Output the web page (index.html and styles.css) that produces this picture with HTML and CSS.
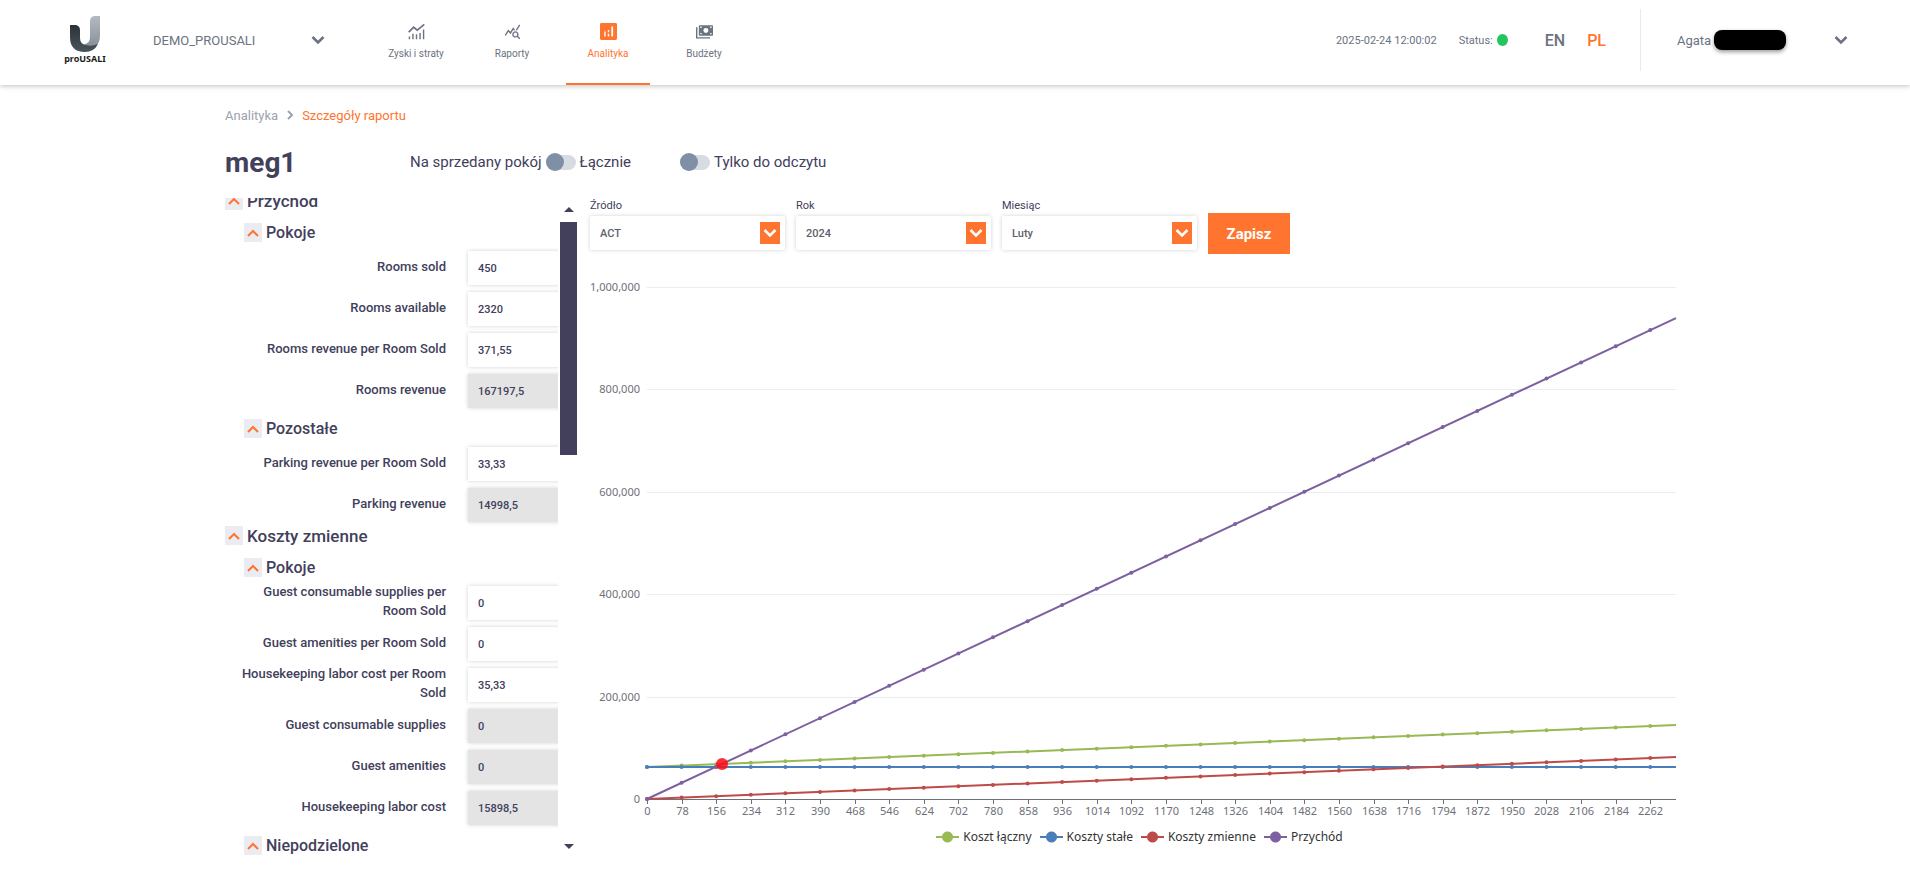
FILE: index.html
```
<!DOCTYPE html>
<html lang="pl">
<head>
<meta charset="utf-8">
<title>proUSALI – Szczegóły raportu</title>
<link rel="stylesheet" href="styles.css">
</head>
<body>
<svg class="defs" aria-hidden="true">
  <symbol id="chev-down" viewBox="0 0 14 10"><path d="M1.500 2L7 7.500 12.500 2" fill="none" stroke="currentColor" stroke-width="2.600"/></symbol>
  <symbol id="chev-up" viewBox="0 0 12 8"><path d="M1 7l5-5 5 5" fill="none" stroke="currentColor" stroke-width="2"/></symbol>
</svg>
<header class="topbar">
  <a class="logo" href="#" aria-label="proUSALI">
    <svg class="logo-mark" viewBox="0 0 30 36">
      <defs>
        <linearGradient id="lg1" x1="0" y1="0" x2="0" y2="1"><stop offset="0" stop-color="#2c3338"/><stop offset="1" stop-color="#4a545c"/></linearGradient>
        <linearGradient id="lg2" x1="0" y1="0" x2="0" y2="1"><stop offset="0" stop-color="#b4babf"/><stop offset="1" stop-color="#87919a"/></linearGradient>
      </defs>
      <path d="M30 0h-6q-4 1-4 5v16q0 7-6 7 4 4 12 2 4-4 4-10z" fill="url(#lg2)"/>
      <path d="M0 9h6q4 1 4 5v8q0 6 6 7 5 2 12-1-4 8-13 8Q0 36 0 21z" fill="url(#lg1)"/>
    </svg>
    <span class="logo-text">proUSALI</span>
  </a>
  <button class="picker property" type="button"><span>DEMO_PROUSALI</span><svg class="chev"><use href="#chev-down"/></svg></button>
  <nav class="nav">
    <a class="nav-item" href="#">
      <svg viewBox="0 0 24 24"><path d="M1 12L8 5l5 4 10-8" transform="translate(0 1)" fill="none" stroke="currentColor" stroke-width="2.400"/><path d="M1 19h2v4H1zM6 15h2v8H6zM11 16h2v7h-2zM16 14h2v9h-2zM21 9h2v14h-2z" fill="currentColor"/></svg>
      <span>Zyski i straty</span>
    </a>
    <a class="nav-item" href="#">
      <svg viewBox="0 0 24 24"><path fill="currentColor" d="M19.880 18.470c.44-.7.7-1.510.7-2.390 0-2.490-2.010-4.500-4.500-4.500s-4.500 2.010-4.500 4.500 2.010 4.500 4.490 4.500c.88 0 1.700-.26 2.390-.7L21.580 23 23 21.580l-3.120-3.110zm-3.800.11c-1.380 0-2.500-1.120-2.500-2.500s1.120-2.500 2.500-2.500 2.500 1.120 2.500 2.500-1.120 2.500-2.500 2.500zm-.36-8.500c-.74.02-1.450.18-2.100.45l-.55-.83-3.800 6.180-3.010-3.520-3.630 5.810L1 17l5-8 3 3.500L13 6l2.720 4.080zm2.590.5c-.64-.28-1.330-.45-2.050-.49L21.380 2 23 3.180l-4.690 7.400z"/></svg>
      <span>Raporty</span>
    </a>
    <a class="nav-item active" href="#">
      <svg viewBox="0 0 24 24"><path fill="currentColor" fill-rule="evenodd" d="M2 0h20a2 2 0 0 1 2 2v20a2 2 0 0 1-2 2H2a2 2 0 0 1-2-2V2a2 2 0 0 1 2-2zM6 12v7h2v-7zM11 10v3h2v-3zM11 15v4h2v-4zM16 5v14h2.500V5z"/></svg>
      <span>Analityka</span>
    </a>
    <a class="nav-item" href="#">
      <svg viewBox="0 0 24 24"><path d="M1 6v15h19" fill="none" stroke="currentColor" stroke-width="2"/><rect x="4" y="3" width="20" height="15" rx="1" fill="currentColor"/><circle cx="14" cy="10.500" r="3.500" fill="#fff"/><path d="M6 5h2v2H6zM20 5h2v2h-2zM6 14h2v2H6zM20 14h2v2h-2z" fill="#fff"/></svg>
      <span>Budżety</span>
    </a>
  </nav>
  <div class="status">
    <time>2025-02-24 12:00:02</time>
    <span class="state">Status: <i class="dot"></i></span>
  </div>
  <div class="langs"><button type="button">EN</button><button class="active" type="button">PL</button></div>
  <button class="picker user" type="button"><span class="who">Agata <i class="pill"></i></span><svg class="chev"><use href="#chev-down"/></svg></button>
</header>

<main class="page">
  <nav class="crumbs" aria-label="Breadcrumb">
    <a href="#">Analityka</a>
    <svg viewBox="0 0 8 10"><path d="M2 1l4 4-4 4" fill="none" stroke="currentColor" stroke-width="2"/></svg>
    <a class="current" href="#">Szczegóły raportu</a>
  </nav>
  <div class="title-row">
    <h1>meg1</h1>
    <label class="switch"><span>Na sprzedany pokój</span><input type="checkbox"><span>Łącznie</span></label>
    <label class="switch"><input type="checkbox"><span>Tylko do odczytu</span></label>
  </div>
  <div class="report">
    <aside class="panel">
      <div class="fields">
        <section class="group">
          <h2><button class="fold" type="button" aria-label="Zwiń Przychód"><svg><use href="#chev-up"/></svg></button>Przychód</h2>
          <div class="sub">
            <h3><button class="fold" type="button" aria-label="Zwiń Pokoje"><svg><use href="#chev-up"/></svg></button>Pokoje</h3>
            <div class="rows">
              <div class="row"><label for="f1">Rooms sold</label><input id="f1" value="450"></div>
              <div class="row"><label for="f2">Rooms available</label><input id="f2" value="2320"></div>
              <div class="row"><label for="f3">Rooms revenue per Room Sold</label><input id="f3" value="371,55"></div>
              <div class="row"><label for="f4">Rooms revenue</label><input id="f4" value="167197,5" readonly></div>
            </div>
          </div>
          <div class="sub">
            <h3><button class="fold" type="button" aria-label="Zwiń Pozostałe"><svg><use href="#chev-up"/></svg></button>Pozostałe</h3>
            <div class="rows">
              <div class="row"><label for="f5">Parking revenue per Room Sold</label><input id="f5" value="33,33"></div>
              <div class="row"><label for="f6">Parking revenue</label><input id="f6" value="14998,5" readonly></div>
            </div>
          </div>
        </section>
        <section class="group">
          <h2><button class="fold" type="button" aria-label="Zwiń Koszty zmienne"><svg><use href="#chev-up"/></svg></button>Koszty zmienne</h2>
          <div class="sub">
            <h3><button class="fold" type="button" aria-label="Zwiń Pokoje"><svg><use href="#chev-up"/></svg></button>Pokoje</h3>
            <div class="rows">
              <div class="row"><label for="f7">Guest consumable supplies per Room Sold</label><input id="f7" value="0"></div>
              <div class="row"><label for="f8">Guest amenities per Room Sold</label><input id="f8" value="0"></div>
              <div class="row"><label for="f9">Housekeeping labor cost per Room Sold</label><input id="f9" value="35,33"></div>
              <div class="row"><label for="f10">Guest consumable supplies</label><input id="f10" value="0" readonly></div>
              <div class="row"><label for="f11">Guest amenities</label><input id="f11" value="0" readonly></div>
              <div class="row"><label for="f12">Housekeeping labor cost</label><input id="f12" value="15898,5" readonly></div>
            </div>
          </div>
          <div class="sub">
            <h3><button class="fold" type="button" aria-label="Zwiń Niepodzielone"><svg><use href="#chev-up"/></svg></button>Niepodzielone</h3>
          </div>
        </section>
      </div>
      <div class="scrollbar" aria-hidden="true">
        <i class="arrow up"></i>
        <div class="track"><div class="thumb"></div></div>
        <i class="arrow down"></i>
      </div>
    </aside>
    <section class="content">
      <form class="filters">
        <div class="field"><label for="src">Źródło</label><div class="select"><select id="src"><option>ACT</option></select><span class="caret"><svg><use href="#chev-down"/></svg></span></div></div>
        <div class="field"><label for="year">Rok</label><div class="select"><select id="year"><option>2024</option></select><span class="caret"><svg><use href="#chev-down"/></svg></span></div></div>
        <div class="field"><label for="month">Miesiąc</label><div class="select"><select id="month"><option>Luty</option></select><span class="caret"><svg><use href="#chev-down"/></svg></span></div></div>
        <button class="save" type="button">Zapisz</button>
      </form>
      <svg class="chart" id="chart" viewBox="0 0 1095 555" role="img" aria-label="Próg rentowności"></svg>
      <ul class="legend">
        <li class="total">Koszt łączny</li>
        <li class="fixed">Koszty stałe</li>
        <li class="variable">Koszty zmienne</li>
        <li class="revenue">Przychód</li>
      </ul>
    </section>
  </div>
</main>
<script src="chart.js"></script>
</body>
</html>
```
FILE: styles.css
```
* { box-sizing: border-box; }
body { margin: 0; background: #fff; color: #42405b; font-family: Roboto, "Liberation Sans", sans-serif; font-size: 13px; }
a { color: inherit; text-decoration: none; }
button { border: 0; padding: 0; background: none; color: inherit; font: inherit; cursor: pointer; }
h1, h2, h3, ul { margin: 0; padding: 0; }
.defs { display: none; }

.topbar { display: flex; height: 85px; padding: 0 62px; color: #6b7280; background: #fff; box-shadow: 0 1px 5px rgba(0, 0, 0, .25); }
.logo { display: flex; flex-direction: column; align-items: center; width: 46px; padding-top: 16px; }
.logo-mark { width: 30px; height: 36px; }
.logo-text { margin-top: 1px; font: 700 9px/12px "Noto Sans", sans-serif; color: #1c1c1c; }
.picker { display: flex; align-items: center; justify-content: space-between; height: 80px; }
.property { width: 172px; margin-left: 45px; }
.chev { width: 14px; height: 10px; }
.nav { display: flex; gap: 12px; margin-left: 49px; }
.nav-item { display: flex; flex-direction: column; align-items: center; gap: 8px; width: 84px; padding-top: 23px; font-size: 10px; line-height: 12px; border-bottom: 2px solid transparent; }
.nav-item svg { width: 17px; height: 17px; }
.nav-item.active { color: #ff742e; border-color: #ff742e; }
.status { display: flex; align-items: center; gap: 22px; height: 80px; margin-left: auto; font-size: 11px; }
.state { display: flex; align-items: center; gap: 4px; }
.dot { width: 11px; height: 12px; border-radius: 50%; background: #22c55e; }
.langs { display: flex; gap: 22px; height: 62px; margin: 9px 0 0 37px; padding-right: 34px; font-size: 16px; font-weight: 500; border-right: 1px solid #e9eaec; }
.langs .active { color: #ff742e; }
.user { width: 171px; margin-left: 36px; }
.who { display: flex; align-items: center; gap: 3px; }
.pill { width: 72px; height: 20px; border-radius: 8px; background: #000; box-shadow: 0 2px 4px rgba(0, 0, 0, .4); }

.page { max-width: 1508px; margin: 0 auto; padding: 22px 24px 0; }
.crumbs { display: flex; align-items: center; gap: 8px; height: 16px; color: #9ca3af; }
.crumbs svg { width: 8px; height: 10px; }
.crumbs .current { color: #ff742e; }
.title-row { display: flex; align-items: center; height: 34px; margin-top: 22px; font-size: 15px; }
h1 { width: 185px; font-size: 28px; font-weight: 700; }
.switch { display: flex; align-items: center; gap: 4px; margin-right: 49px; }
.switch input { appearance: none; position: relative; width: 30px; height: 15px; margin: 0; border-radius: 8px; background: #d7dce3; }
.switch input::before { content: ""; position: absolute; left: 0; top: -2px; width: 18px; height: 18px; border-radius: 50%; background: #7f8fa6; }

.report { display: flex; gap: 13px; margin-top: 19px; }
.panel { display: flex; flex: 0 0 352px; height: 662px; overflow: hidden; }
.fields { width: 333px; margin-top: -7px; overflow: hidden; }
.group + .group { margin-top: 4px; }
h2, h3 { display: flex; align-items: center; gap: 4px; height: 19px; font-weight: 500; white-space: nowrap; }
h2 { font-size: 17px; }
h3 { font-size: 16px; }
h2 + .sub { margin-top: 13px; }
.sub + .sub { margin-top: 11px; }
h3 { margin-left: 19px; }
.fold { display: flex; align-items: center; justify-content: center; width: 18px; height: 19px; background: #ebecf2; color: #ff742e; }
.fold svg { width: 12px; height: 8px; }
.rows { display: flex; flex-direction: column; gap: 7px; margin-top: 9px; }
.row { display: flex; align-items: center; gap: 22px; height: 34px; }
.row label { flex: 0 0 221px; padding: 0 0 4px 12px; line-height: 19px; font-weight: 500; text-align: right; }
.row input { flex: 0 0 120px; height: 34px; padding: 0 10px; border: 0; background: #fff; color: #42405b; font: 500 11px Roboto, sans-serif; box-shadow: 0 0 4px rgba(0, 0, 0, .18); }
.row input:read-only { background: #e4e4e4; }
.scrollbar { display: flex; flex-direction: column; align-items: center; width: 17px; margin-left: 2px; padding: 9px 0 11px; }
.arrow { border: 5px solid transparent; }
.up { border-top: 0; border-bottom-color: #42405b; }
.down { border-bottom: 0; border-top-color: #42405b; }
.track { flex: 1; width: 100%; padding: 10px 0; }
.thumb { height: 38%; background: #42405b; }

.content { flex: 1; min-width: 0; }
.filters { display: flex; align-items: flex-end; gap: 11px; height: 56px; }
.field { width: 195px; padding-bottom: 4px; font-size: 11px; line-height: 14px; }
.select { position: relative; margin-top: 3px; }
.select select { display: block; appearance: none; width: 100%; height: 34px; padding: 0 10px; border: 0; border-radius: 2px; background: #fff; color: #5f5f6b; font: 500 11px Roboto, sans-serif; box-shadow: 0 0 4px rgba(0, 0, 0, .18); }
.caret { position: absolute; top: 6px; right: 5px; display: flex; align-items: center; justify-content: center; width: 20px; height: 22px; background: #ff742e; color: #fff; pointer-events: none; }
.caret svg { width: 14px; height: 10px; }
.save { width: 82px; height: 41px; background: #ff742e; color: #fff; font-size: 15px; font-weight: 700; }

.chart { display: block; width: 100%; margin-top: 20px; overflow: visible; font: 11px "Noto Sans", sans-serif; }
.chart text { fill: #6e7079; }
.grid { stroke: #e9ebf5; }
.axis { stroke: #6e7079; }
.series { fill: none; stroke-width: 2; }
.breakeven { fill: #ff0a12; fill-opacity: .85; }
.legend { display: flex; justify-content: center; gap: 8px; padding-left: 4px; list-style: none; font: 12px/16px "Noto Sans", sans-serif; color: #333; }
.legend li { display: flex; align-items: center; gap: 4px; }
.legend li::before { content: ""; width: 23px; height: 12px; background: radial-gradient(circle at center, currentColor 5px, transparent 6px), linear-gradient(currentColor, currentColor) center / 100% 2px no-repeat; }
.legend .total::before { color: #98b954; }
.legend .fixed::before { color: #4a7ebb; }
.legend .variable::before { color: #be4b48; }
.legend .revenue::before { color: #7d60a0; }
```
FILE: chart.js
```
const svg = document.getElementById('chart');
const NS = 'http://www.w3.org/2000/svg';
const rooms = 2320, step = 78, fixedCost = 62500;
const left = 57, right = 1086, top0 = 13, bottom = 525, maxValue = 1000000;
const x = v => left + v / rooms * (right - left);
const y = v => bottom - v / maxValue * (bottom - top0);

function add(name, attrs, text) {
  const el = document.createElementNS(NS, name);
  for (const key in attrs) el.setAttribute(key, attrs[key]);
  if (text) el.textContent = text;
  svg.appendChild(el);
}

for (let v = 0; v <= maxValue; v += 200000) {
  const py = Math.round(y(v)) + 0.5;
  if (v) add('line', { class: 'grid', x1: left, x2: right, y1: py, y2: py });
  add('text', { x: left - 7, y: py + 3, 'text-anchor': 'end' }, v.toLocaleString('en-US'));
}
add('line', { class: 'axis', x1: left, x2: right, y1: bottom + 0.5, y2: bottom + 0.5 });
for (let v = 0; v < rooms; v += step) {
  const px = Math.round(x(v)) + 0.5;
  add('line', { class: 'axis', x1: px, x2: px, y1: bottom, y2: bottom + 5 });
  add('text', { x: px, y: bottom + 16, 'text-anchor': 'middle' }, String(v));
}

const series = [
  ['#98b954', n => fixedCost + 35.33 * n],
  ['#4a7ebb', () => fixedCost],
  ['#be4b48', n => 35.33 * n],
  ['#7d60a0', n => (371.55 + 33.33) * n]
];
for (const [color, f] of series) {
  add('line', { class: 'series', stroke: color, x1: x(0), y1: y(f(0)), x2: x(rooms), y2: y(f(rooms)) });
  for (let v = 0; v < rooms; v += step) add('circle', { cx: x(v), cy: y(f(v)), r: 2, fill: color });
}
const even = fixedCost / (371.55 + 33.33 - 35.33);
add('circle', { class: 'breakeven', cx: x(even), cy: y(404.88 * even), r: 6 });
```
